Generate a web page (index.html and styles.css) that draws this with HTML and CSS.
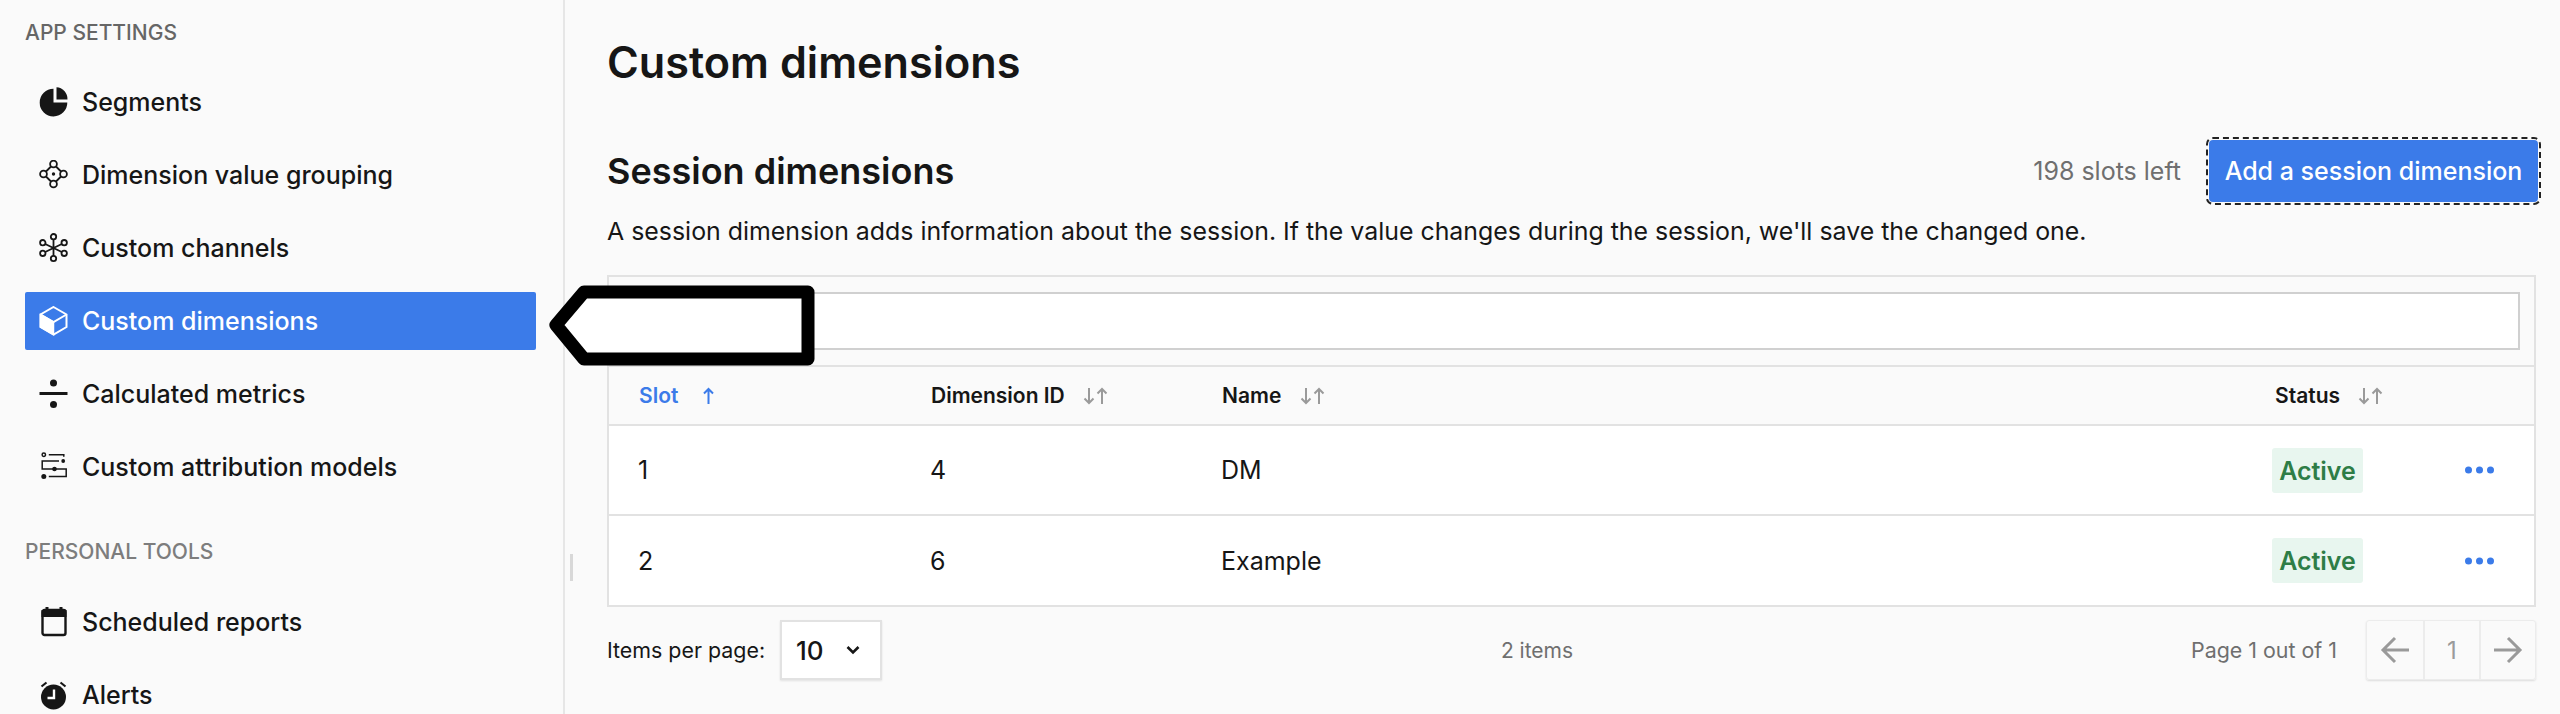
FILE: index.html
```html
<!DOCTYPE html>
<html lang="en">
<head>
    <meta charset="UTF-8">
    <meta name="viewport" content="width=device-width, initial-scale=1.0">
    <title>Custom dimensions</title>
    <link rel="stylesheet" href="styles.css">
</head>
<body>
    <svg class="sprites" width="0" height="0">
        <symbol id="sort" viewBox="0 0 25 18">
            <path d="M6 1v15M1.500 11.500 6 16l4.500-4.500" fill="none" stroke="#9a9a9a" stroke-width="2"/>
            <path d="M19 17V2M14.500 6.500 19 2l4.500 4.500" fill="none" stroke="#9a9a9a" stroke-width="2"/>
        </symbol>
        <symbol id="dots" viewBox="0 0 29 8">
            <circle cx="3.500" cy="4" r="3.500"/>
            <circle cx="14.500" cy="4" r="3.500"/>
            <circle cx="25.500" cy="4" r="3.500"/>
        </symbol>
    </svg>

    <aside class="sidebar">
        <h2 class="nav-title">APP SETTINGS</h2>
        <nav class="nav-list">
            <a class="nav-item">
                <svg class="nav-icon" viewBox="0 0 28 30"><path d="M14 1.800V15.500H27.800A13.800 13.800 0 1 1 14 1.800z" fill="#161616"/><path d="M17 .2A11.500 12 0 0 1 28 12.500H17z" fill="#161616"/></svg>
                Segments
            </a>
            <a class="nav-item">
                <svg class="nav-icon" viewBox="0 0 28 30" fill="none" stroke="#161616" stroke-width="1.800"><circle cx="14" cy="4" r="3.400"/><circle cx="14" cy="24" r="3.400"/><circle cx="4" cy="14" r="3.400"/><circle cx="24" cy="14" r="3.400"/><path d="M11.500 6.500 6.500 11.500M16.500 6.500l5 5M6.500 16.500l5 5M21.500 16.500l-5 5"/><circle cx="14" cy="14" r="1.700" fill="#161616" stroke="none"/></svg>
                Dimension value grouping
            </a>
            <a class="nav-item">
                <svg class="nav-icon" viewBox="0 0 28 30" fill="none" stroke="#161616" stroke-width="1.800"><circle cx="14" cy="3.700" r="2.700"/><circle cx="14" cy="25.500" r="2.700"/><circle cx="3.300" cy="9.700" r="2.700"/><circle cx="24.700" cy="9.700" r="2.700"/><circle cx="3.300" cy="20.300" r="2.700"/><circle cx="24.700" cy="20.300" r="2.700"/><path d="M14 6.400v16.400M5.700 11 22.300 19M22.300 11 5.700 19"/></svg>
                Custom channels
            </a>
            <a class="nav-item active">
                <svg class="nav-icon" viewBox="0 0 28 30"><path d="M14 1 27 8.500V21L14 28.500 1 21V8.500z" fill="none" stroke="#fff" stroke-width="2"/><path d="M1 8.500 14 16V28.500L1 21z" fill="#fff" stroke="#fff" stroke-width="1.500"/><path d="M1 8.500 14 16 27 8.500" fill="none" stroke="#fff" stroke-width="2"/></svg>
                Custom dimensions
            </a>
            <a class="nav-item">
                <svg class="nav-icon" viewBox="0 0 28 30" fill="#161616"><circle cx="14" cy="4" r="3.500"/><rect x="0" y="13" width="28" height="3"/><circle cx="14" cy="25.500" r="3.500"/></svg>
                Calculated metrics
            </a>
            <a class="nav-item">
                <svg class="nav-icon" viewBox="0 0 28 30" fill="none" stroke="#161616" stroke-width="1.500"><circle cx="4.300" cy="2.700" r="1.700"/><path d="M9.300 2.700h15v2M19.500 9H2.700v8h24v7.500H9.300"/><circle cx="23.700" cy="9" r="1.900" fill="#161616" stroke="none"/><circle cx="15" cy="17" r="2.300" fill="#161616" stroke="none"/><circle cx="4.300" cy="24.500" r="2.500" fill="#161616" stroke="none"/></svg>
                Custom attribution models
            </a>
        </nav>
        <h2 class="nav-title muted">PERSONAL TOOLS</h2>
        <nav class="nav-list">
            <a class="nav-item">
                <svg class="nav-icon" viewBox="0 0 28 30"><rect x="3" y="3" width="23" height="25" rx="2" fill="none" stroke="#161616" stroke-width="2.400"/><path d="M2 3h25v7H2zM6 0h3v4H6zM20 0h3v4h-3z" fill="#161616"/></svg>
                Scheduled reports
            </a>
            <a class="nav-item">
                <svg class="nav-icon" viewBox="0 0 28 30"><circle cx="14" cy="17" r="12.500" fill="#161616"/><path d="M2 6.500 7 2.500M26 6.500l-5-4" stroke="#161616" stroke-width="2.200" fill="none"/><path d="M14.500 9.500v8.500H8" stroke="#fff" stroke-width="2.400" fill="none"/></svg>
                Alerts
            </a>
        </nav>
        <span class="resize-handle"></span>
    </aside>

    <main class="content">
        <h1 class="page-title">Custom dimensions</h1>

        <div class="section-head">
            <h2 class="section-title">Session dimensions</h2>
            <span class="slots">198 slots left</span>
            <button class="add-btn">Add a session dimension</button>
        </div>
        <p class="section-desc">A session dimension adds information about the session. If the value changes during the session, we'll save the changed one.</p>

        <div class="panel">
            <div class="toolbar">
                <div class="search-box"></div>
            </div>
            <table class="dim-table">
                <colgroup>
                    <col class="col-slot">
                    <col class="col-id">
                    <col class="col-name">
                    <col class="col-status">
                    <col>
                </colgroup>
                <thead>
                    <tr>
                        <th class="sorted">Slot <svg class="sort-up" viewBox="0 0 13 18"><path d="M6.500 17V2M2 6.500 6.500 2 11 6.500" fill="none" stroke="#3b7be9" stroke-width="2"/></svg></th>
                        <th>Dimension ID <svg class="sort-icon"><use href="#sort"/></svg></th>
                        <th>Name <svg class="sort-icon"><use href="#sort"/></svg></th>
                        <th>Status <svg class="sort-icon"><use href="#sort"/></svg></th>
                        <th></th>
                    </tr>
                </thead>
                <tbody>
                    <tr>
                        <td>1</td>
                        <td>4</td>
                        <td>DM</td>
                        <td><span class="badge">Active</span></td>
                        <td><svg class="more"><use href="#dots"/></svg></td>
                    </tr>
                    <tr>
                        <td>2</td>
                        <td>6</td>
                        <td>Example</td>
                        <td><span class="badge">Active</span></td>
                        <td><svg class="more"><use href="#dots"/></svg></td>
                    </tr>
                </tbody>
            </table>
        </div>

        <div class="table-foot">
            <div class="per-page">
                <span>Items per page:</span>
                <div class="page-select">
                    10
                    <svg class="chevron" viewBox="0 0 14 10"><path d="M1.500 2 7 7.500 12.500 2" fill="none" stroke="#161616" stroke-width="2.600"/></svg>
                </div>
            </div>
            <span class="count">2 items</span>
            <div class="pager">
                <span class="page-label">Page 1 out of 1</span>
                <div class="page-btns">
                    <span class="page-btn"><svg class="page-arrow" viewBox="0 0 30 28"><path d="M29 14H3M15 2 3 14l12 12" fill="none" stroke="#9a9a9a" stroke-width="3"/></svg></span>
                    <span class="page-btn">1</span>
                    <span class="page-btn"><svg class="page-arrow" viewBox="0 0 30 28"><path d="M1 14h26M15 2l12 12-12 12" fill="none" stroke="#9a9a9a" stroke-width="3"/></svg></span>
                </div>
            </div>
        </div>
    </main>

    <!-- annotation drawn over the screenshot -->
    <svg class="callout" viewBox="0 0 266 82">
        <path d="M35 7H259V74H35L7 40z" fill="#fff" stroke="#000" stroke-width="13" stroke-linejoin="round"/>
    </svg>
</body>
</html>
```

FILE: styles.css
```css
:root {
    --blue: #3b7be9;
    --line: #e2e2e2;
    --ink: #161616;
    --grey: #6f6f6f;
}

* {
    box-sizing: border-box;
}

body {
    font-family: 'Inter', 'Liberation Sans', sans-serif;
    background: #fafafa;
    color: var(--ink);
    margin: 0;
    height: 714px;
    overflow: hidden;
    display: flex;
    position: relative;
}

.sprites {
    position: absolute;
}

.sidebar {
    width: 565px;
    height: 714px;
    flex-shrink: 0;
    border-right: 2px solid #e6e6e6;
    padding: 19px 27px 0 25px;
    position: relative;
    overflow: visible;
}

.nav-title {
    font-size: 21px;
    line-height: 28px;
    font-weight: 500;
    color: #666;
    margin: 0 0 26px;
}

.nav-title.muted {
    color: #7d7d7d;
    margin-top: 42px;
    margin-bottom: 27px;
}

.nav-list {
    display: flex;
    flex-direction: column;
    gap: 15px;
}

.nav-item {
    height: 58px;
    flex-shrink: 0;
    display: flex;
    align-items: center;
    gap: 14px;
    padding-left: 14px;
    font-size: 25px;
    font-weight: 500;
    border-radius: 2px;
}

.nav-item.active {
    background: var(--blue);
    color: #fff;
}

.nav-icon {
    width: 29px;
    height: 30px;
    flex-shrink: 0;
}

.resize-handle {
    position: absolute;
    right: -10px;
    top: 554px;
    width: 3px;
    height: 27px;
    background: #d8d8d8;
}

.content {
    flex: 1;
    padding: 36px 22px 0 42px;
    min-width: 0;
}

.page-title {
    font-size: 43.2px;
    line-height: 52px;
    font-weight: 600;
    margin: 0 0 52px;
}

.section-head {
    display: flex;
    align-items: center;
    height: 62px;
}

.section-title {
    font-size: 36px;
    font-weight: 600;
    margin: 0;
    flex: 1;
}

.slots {
    font-size: 25px;
    color: var(--grey);
    margin-right: 28px;
}

.add-btn {
    font-family: inherit;
    font-size: 25px;
    font-weight: 500;
    color: #fff;
    background: var(--blue);
    border: 0;
    border-radius: 4px;
    width: 329px;
    height: 62px;
    padding: 0;
    outline: 2px dashed #222;
    outline-offset: 1px;
}

.section-desc {
    font-size: 24.9px;
    line-height: 30px;
    margin: 14px 0 29px;
}

.panel {
    margin-right: 2px;
    border: 2px solid var(--line);
}

.toolbar {
    padding: 15px 14px;
    border-bottom: 2px solid var(--line);
}

.search-box {
    height: 58px;
    background: #fff;
    border: 2px solid #d0d0d0;
}

.dim-table {
    width: 100%;
    table-layout: fixed;
    border-collapse: collapse;
}

.col-slot {
    width: 292px;
}

.col-id {
    width: 291px;
}

.col-name {
    width: 1053px;
}

.col-status {
    width: 180px;
}

.dim-table th {
    height: 58px;
    padding: 0 0 0 30px;
    text-align: left;
    font-size: 21px;
    font-weight: 600;
    border-bottom: 2px solid var(--line);
}

.dim-table th.sorted {
    color: var(--blue);
}

.sort-icon {
    width: 25px;
    height: 18px;
    margin-left: 13px;
    vertical-align: -2px;
}

.sort-up {
    width: 13px;
    height: 18px;
    margin-left: 18px;
    vertical-align: -2px;
}

.dim-table td {
    height: 90px;
    padding: 0 0 0 29px;
    background: #fff;
    font-size: 25px;
    border-bottom: 2px solid var(--line);
}

.dim-table tr:last-child td {
    border-bottom: 0;
}

.badge {
    display: inline-block;
    margin-left: -2px;
    width: 91px;
    height: 45px;
    line-height: 46px;
    text-align: center;
    background: #e8f6ef;
    color: #2e7d46;
    font-weight: 600;
    border-radius: 3px;
}

.more {
    display: block;
    width: 29px;
    height: 8px;
    margin-left: 11px;
    fill: var(--blue);
}

.table-foot {
    margin: 13px 2px 0 0;
    height: 60px;
    display: grid;
    grid-template-columns: 894fr auto 963fr;
    align-items: center;
}

.per-page {
    display: flex;
    align-items: center;
    gap: 15px;
    font-size: 21.4px;
}

.page-select {
    width: 102px;
    height: 60px;
    background: #fff;
    border: 2px solid var(--line);
    box-shadow: 0 1px 2px rgba(0,0,0,0.1);
    display: flex;
    align-items: center;
    justify-content: space-between;
    padding: 0 20px 0 14px;
    font-size: 26px;
    font-weight: 500;
}

.chevron {
    width: 14px;
    height: 10px;
}

.count {
    font-size: 21px;
    color: var(--grey);
}

.pager {
    display: flex;
    align-items: center;
    justify-content: flex-end;
    gap: 29px;
}

.page-label {
    font-size: 21.4px;
    color: var(--grey);
}

.page-btns {
    display: flex;
    border: 1px solid #ececec;
    border-radius: 3px;
    box-shadow: 0 1px 2px rgba(0,0,0,0.12);
}

.page-btn {
    width: 56px;
    height: 58px;
    display: flex;
    align-items: center;
    justify-content: center;
    font-size: 24px;
    color: #9a9a9a;
    border-left: 2px solid #ececec;
}

.page-btn:first-child {
    border-left: 0;
}

.page-arrow {
    width: 30px;
    height: 28px;
}

.callout {
    position: absolute;
    left: 549px;
    top: 285px;
    width: 266px;
    height: 82px;
}
```
